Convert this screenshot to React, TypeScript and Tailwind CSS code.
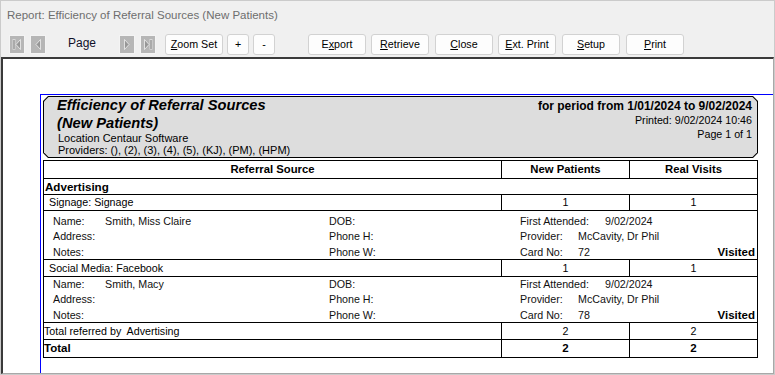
import React from "react";

type NavKind = "first" | "prev" | "next" | "last";

const NavIcon = ({ kind }: { kind: NavKind }) => (
  <div className="w-[16px] h-[19px] shrink-0 border border-[#f4f4f4] bg-[#b6b6b6] flex items-center justify-center">
    <svg width="14" height="17" viewBox="0 0 14 17" className="block">
      {kind === "first" && (
        <>
          <rect x="3" y="3.5" width="2" height="10" fill="#8c8c8c" stroke="#f0f0f0" strokeWidth="0.6" />
          <path d="M10.5 3.5 L6 8.5 L10.5 13.5 Z" fill="#969696" stroke="#f0f0f0" strokeWidth="0.8" />
        </>
      )}
      {kind === "prev" && <path d="M9.5 3.5 L5 8.5 L9.5 13.5 Z" fill="#969696" stroke="#f0f0f0" strokeWidth="0.8" />}
      {kind === "next" && <path d="M4.5 3.5 L9 8.5 L4.5 13.5 Z" fill="#969696" stroke="#f0f0f0" strokeWidth="0.8" />}
      {kind === "last" && (
        <>
          <path d="M3.5 3.5 L8 8.5 L3.5 13.5 Z" fill="#969696" stroke="#f0f0f0" strokeWidth="0.8" />
          <rect x="9" y="3.5" width="2" height="10" fill="#8c8c8c" stroke="#f0f0f0" strokeWidth="0.6" />
        </>
      )}
    </svg>
  </div>
);

const Btn = ({ children, w, className = "" }: { children: React.ReactNode; w: string; className?: string }) => (
  <div
    className={`h-[21px] shrink-0 flex items-center justify-center bg-[#fdfdfd] border border-[#d2d2d2] rounded-[3px] text-[10.7px] text-black ${w} ${className}`}
  >
    {children}
  </div>
);

const NumRow = ({
  label,
  a,
  b,
  h,
  bold = false,
  pl = "pl-[5px]",
}: {
  label: React.ReactNode;
  a: string;
  b: string;
  h: string;
  bold?: boolean;
  pl?: string;
}) => (
  <div className={`${h} flex border-b border-black ${bold ? "font-bold text-[11.5px]" : "text-[10.7px]"}`}>
    <div className={`w-[458px] border-r border-black flex items-center whitespace-pre ${pl}`}>{label}</div>
    <div className="w-[128px] border-r border-black flex items-center justify-center">{a}</div>
    <div className="flex-1 flex items-center justify-center">{b}</div>
  </div>
);

const Detail = ({ name, card, h, pt }: { name: string; card: string; h: string; pt: string }) => (
  <div className={`${h} ${pt} border-b border-black flex pl-[9px] pr-[2px] text-[10.7px] leading-[15.3px] text-[#111]`}>
    <div className="w-[276px]">
      <div className="flex">
        <span className="w-[52px]">Name:</span>
        <span>{name}</span>
      </div>
      <div>Address:</div>
      <div>Notes:</div>
    </div>
    <div className="w-[191px]">
      <div>DOB:</div>
      <div>Phone H:</div>
      <div>Phone W:</div>
    </div>
    <div className="flex-1">
      <div className="flex">
        <span className="w-[85px]">First Attended:</span>
        <span>9/02/2024</span>
      </div>
      <div className="flex">
        <span className="w-[58px]">Provider:</span>
        <span>McCavity, Dr Phil</span>
      </div>
      <div className="flex">
        <span className="w-[58px]">Card No:</span>
        <span>{card}</span>
        <span className="ml-auto font-bold text-[11.5px] text-black">Visited</span>
      </div>
    </div>
  </div>
);

export default function App() {
  return (
    <div className="w-[775px] h-[375px] bg-[#f0f0f0] border border-[#cbcbcb] flex flex-col overflow-hidden font-['Liberation_Sans',Arial,sans-serif]">
      {/* title */}
      <div className="h-[29px] shrink-0 flex items-center pl-[6px] text-[11.5px] text-[#6e6e6e]">
        Report: Efficiency of Referral Sources (New Patients)
      </div>

      {/* toolbar */}
      <div className="h-[27px] shrink-0 flex items-start pt-[4px] pl-[8px]">
        <div className="mt-px flex gap-[5px]">
          <NavIcon kind="first" />
          <NavIcon kind="prev" />
        </div>
        <div className="w-[51px] ml-[22px] text-[12px] leading-[18px] text-[#10102a]">Page</div>
        <div className="mt-px flex gap-[5px]">
          <NavIcon kind="next" />
          <NavIcon kind="last" />
        </div>
        <Btn w="w-[58px]" className="ml-[9px]">
          <span className="underline">Z</span>oom Set
        </Btn>
        <Btn w="w-[22px]" className="ml-[4px]">
          +
        </Btn>
        <Btn w="w-[22px]" className="ml-[4px] border-[#9fb8d8]">
          -
        </Btn>
        <Btn w="w-[58px]" className="ml-[33px]">
          E<span className="underline">x</span>port
        </Btn>
        <Btn w="w-[58px]" className="ml-[5px]">
          <span className="underline">R</span>etrieve
        </Btn>
        <Btn w="w-[58px]" className="ml-[6px]">
          <span className="underline">C</span>lose
        </Btn>
        <Btn w="w-[58px]" className="ml-[5px]">
          <span className="underline">E</span>xt. Print
        </Btn>
        <Btn w="w-[58px]" className="ml-[6px]">
          <span className="underline">S</span>etup
        </Btn>
        <Btn w="w-[58px]" className="ml-[6px]">
          <span className="underline">P</span>rint
        </Btn>
      </div>

      {/* report frame */}
      <div className="flex-1 flex flex-col bg-white border border-[#a8a8a8] border-t-2 border-l-2 border-t-[#3a3a3a] border-l-[#3a3a3a] pl-[37px] pt-[35px]">
        {/* page edge: blue left/top line */}
        <div className="flex-1 flex flex-col bg-[#0000ff] pl-px pt-px">
          <div className="flex-1 bg-white pl-[2px] pt-px">
            {/* header box */}
            <div className="w-[715px] h-[62px] bg-black p-px [clip-path:polygon(5px_0,calc(100%_-_5px)_0,100%_5px,100%_calc(100%_-_5px),calc(100%_-_5px)_100%,5px_100%,0_calc(100%_-_5px),0_5px)]">
              <div className="h-full bg-[#dddddd] flex justify-between [clip-path:polygon(4.5px_0,calc(100%_-_4.5px)_0,100%_4.5px,100%_calc(100%_-_4.5px),calc(100%_-_4.5px)_100%,4.5px_100%,0_calc(100%_-_4.5px),0_4.5px)]">
                <div className="pl-[13px] text-black">
                  <div className="text-[14.7px] leading-[17.5px] font-bold italic">Efficiency of Referral Sources</div>
                  <div className="text-[14.7px] leading-[17.5px] font-bold italic">(New Patients)</div>
                  <div className="pl-px text-[11px] leading-[12px]">Location Centaur Software</div>
                  <div className="pl-px text-[11px] leading-[12px]">Providers: (), (2), (3), (4), (5), (KJ), (PM), (HPM)</div>
                </div>
                <div className="pr-[5px] pt-[2px] text-right text-black">
                  <div className="text-[12px] leading-[14px] font-bold">for period from 1/01/2024 to 9/02/2024</div>
                  <div className="text-[10.7px] leading-[14px]">Printed: 9/02/2024 10:46</div>
                  <div className="text-[10.7px] leading-[14px]">Page 1 of 1</div>
                </div>
              </div>
            </div>

            {/* table */}
            <div className="w-[715px] mt-[2px] border-t border-x border-black text-black">
              <div className="h-[18px] flex border-b border-black font-bold text-[11.3px]">
                <div className="w-[458px] border-r border-black flex items-center justify-center">Referral Source</div>
                <div className="w-[128px] border-r border-black flex items-center justify-center">New Patients</div>
                <div className="flex-1 flex items-center justify-center">Real Visits</div>
              </div>
              <div className="h-[16px] border-b border-black flex items-center pl-px font-bold text-[11.6px]">Advertising</div>
              <NumRow h="h-[16px]" label="Signage: Signage" a="1" b="1" />
              <Detail h="h-[49px]" pt="pt-[3px]" name="Smith, Miss Claire" card="72" />
              <NumRow h="h-[17px]" label="Social Media: Facebook" a="1" b="1" />
              <Detail h="h-[46px]" pt="pt-0" name="Smith, Macy" card="78" />
              <NumRow h="h-[17px]" pl="pl-0" label="Total referred by  Advertising" a="2" b="2" />
              <NumRow h="h-[18px]" pl="pl-0" bold label="Total" a="2" b="2" />
            </div>
          </div>
        </div>
      </div>
    </div>
  );
}
